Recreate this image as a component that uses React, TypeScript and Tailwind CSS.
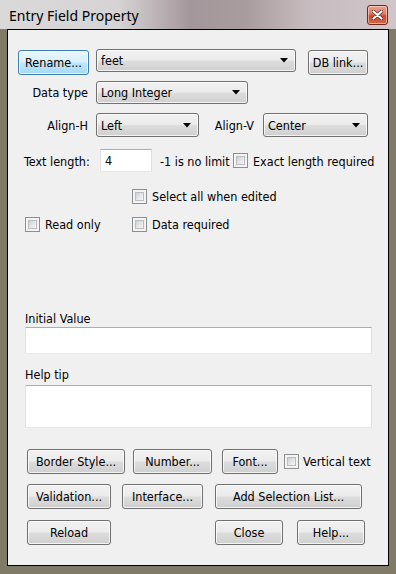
import React from "react";

const GRAY =
  "border-[#707070] bg-[linear-gradient(#f2f2f2_0%,#ebebeb_48%,#dddddd_52%,#cfcfcf_100%)]";
const BLUE =
  "border-[#3c7fb1] bg-[linear-gradient(#eaf6fd_0%,#d9f0fc_48%,#bee6fd_52%,#a7d9f5_100%)]";

const Btn = ({
  cls,
  children,
  def,
}: {
  cls: string;
  children: React.ReactNode;
  def?: boolean;
}) => (
  <div
    className={`${cls} h-[25px] shrink-0 flex items-center justify-center rounded-[3px] border ${
      def ? BLUE : GRAY
    } shadow-[inset_0_0_0_1px_rgba(255,255,255,0.75)] text-black`}
  >
    {children}
  </div>
);

const Combo = ({ cls, text }: { cls: string; text: string }) => (
  <div
    className={`${cls} h-[23px] shrink-0 flex items-center justify-between rounded-[3px] border ${GRAY} shadow-[inset_0_0_0_1px_rgba(255,255,255,0.75)] pl-[4px] pr-[7px] text-black`}
  >
    <span>{text}</span>
    <svg width="8" height="5" viewBox="0 0 8 5">
      <path d="M0 0H8L4 4.5Z" fill="#000" />
    </svg>
  </div>
);

const Cb = () => (
  <div className="w-[15px] h-[15px] shrink-0 border border-[#8e8f8f] bg-[#f4f4f4] p-[2px]">
    <div className="w-full h-full border border-[#b9bcc0] bg-[linear-gradient(135deg,#cdd0d4_0%,#e6e7e8_55%,#f6f6f6_100%)]" />
  </div>
);

const Field = ({
  cls,
  children,
}: {
  cls: string;
  children?: React.ReactNode;
}) => (
  <div
    className={`${cls} shrink-0 bg-white border border-t-[#abadb3] border-l-[#e2e3ea] border-r-[#dbdfe6] border-b-[#e3e9ef]`}
  >
    {children}
  </div>
);

export default function App() {
  return (
    <div className="w-[396px] h-[574px] overflow-hidden bg-[#7f7b67] font-['DejaVu_Sans_Condensed','DejaVu_Sans',sans-serif] text-[12.5px] leading-[15px] text-black">
      {/* title bar */}
      <div className="h-[29px] flex items-center justify-between pl-[9px] pr-[8px] bg-[linear-gradient(90deg,#dad9d9_0%,#d6d3d4_30%,#a4979b_48%,#a99c9f_62%,#c7bcbf_78%,#d0c6c9_100%)]">
        <span className="font-['Noto_Sans',sans-serif] text-[14px] leading-[20px] text-black mt-[2px]">
          Entry Field Property
        </span>
        <div className="w-[21px] h-[20px] mt-[1px] rounded-[3px] border border-[#6e2a1c] bg-[linear-gradient(#eba494_0%,#db7a60_45%,#c8462b_55%,#d6694a_100%)] shadow-[inset_0_0_0_1px_rgba(255,220,210,0.6)] flex items-center justify-center">
          <svg width="11" height="10" viewBox="0 0 11 10">
            <path
              d="M1.5 1.5L9.5 8.5M9.5 1.5L1.5 8.5"
              stroke="#5a2418"
              strokeWidth="3.6"
              strokeLinecap="round"
            />
            <path
              d="M1.5 1.5L9.5 8.5M9.5 1.5L1.5 8.5"
              stroke="#ffffff"
              strokeWidth="2.2"
              strokeLinecap="round"
            />
          </svg>
        </div>
      </div>

      {/* client area */}
      <div className="ml-[7px] w-[382px] h-[537px] border border-black bg-[#f0f0f0] flex flex-col">
        {/* row 1 */}
        <div className="mt-[19px] h-[26px] flex items-start">
          <Btn cls="ml-[10px] mt-[1px] w-[71px]" def>
            Rename...
          </Btn>
          <Combo cls="ml-[7px] w-[200px]" text="feet" />
          <Btn cls="ml-[12px] mt-[1px] w-[60px]">DB link...</Btn>
        </div>

        {/* row 2 */}
        <div className="mt-[6px] flex items-center">
          <span className="w-[80px] text-right">Data type</span>
          <Combo cls="ml-[8px] w-[152px]" text="Long Integer" />
        </div>

        {/* row 3 */}
        <div className="mt-[9px] flex items-center">
          <span className="w-[80px] text-right">Align-H</span>
          <Combo cls="ml-[8px] w-[103px] h-[24px]" text="Left" />
          <span className="w-[64px] pr-[9px] text-right">Align-V</span>
          <Combo cls="w-[105px] h-[24px]" text="Center" />
        </div>

        {/* row 4 */}
        <div className="mt-[12px] flex items-center">
          <span className="ml-[16px] w-[76px] mt-[2px]">Text length:</span>
          <Field cls="w-[52px] h-[23px] flex items-center pl-[4px]">4</Field>
          <span className="ml-[8px] w-[73px] whitespace-nowrap mt-[2px]">
            -1 is no limit
          </span>
          <Cb />
          <span className="ml-[5px] whitespace-nowrap mt-[2px]">
            Exact length required
          </span>
        </div>

        {/* row 5 */}
        <div className="mt-[17px] flex items-center">
          <div className="ml-[124px]">
            <Cb />
          </div>
          <span className="ml-[5px]">Select all when edited</span>
        </div>

        {/* row 6 */}
        <div className="mt-[13px] flex items-center">
          <div className="ml-[17px] w-[107px] flex items-center">
            <Cb />
            <span className="ml-[5px]">Read only</span>
          </div>
          <Cb />
          <span className="ml-[5px]">Data required</span>
        </div>

        {/* initial value */}
        <div className="mt-[79px] ml-[17px]">Initial Value</div>
        <Field cls="mt-[1px] ml-[17px] w-[347px] h-[27px]" />

        <div className="mt-[13px] ml-[17px]">Help tip</div>
        <Field cls="mt-[3px] ml-[17px] w-[347px] h-[43px]" />

        {/* buttons row 1 */}
        <div className="mt-[21px] flex items-center">
          <Btn cls="ml-[19px] w-[98px]">Border Style...</Btn>
          <Btn cls="ml-[8px] w-[79px]">Number...</Btn>
          <Btn cls="ml-[10px] w-[56px]">Font...</Btn>
          <div className="ml-[6px]">
            <Cb />
          </div>
          <span className="ml-[4px] whitespace-nowrap">Vertical text</span>
        </div>

        {/* buttons row 2 */}
        <div className="mt-[10px] flex items-center">
          <Btn cls="ml-[19px] w-[84px]">Validation...</Btn>
          <Btn cls="ml-[11px] w-[81px]">Interface...</Btn>
          <Btn cls="ml-[12px] w-[147px]">Add Selection List...</Btn>
        </div>

        {/* buttons row 3 */}
        <div className="mt-[11px] flex items-center">
          <Btn cls="ml-[19px] w-[84px]">Reload</Btn>
          <Btn cls="ml-[104px] w-[68px]">Close</Btn>
          <Btn cls="ml-[14px] w-[68px]">Help...</Btn>
        </div>
      </div>
    </div>
  );
}
